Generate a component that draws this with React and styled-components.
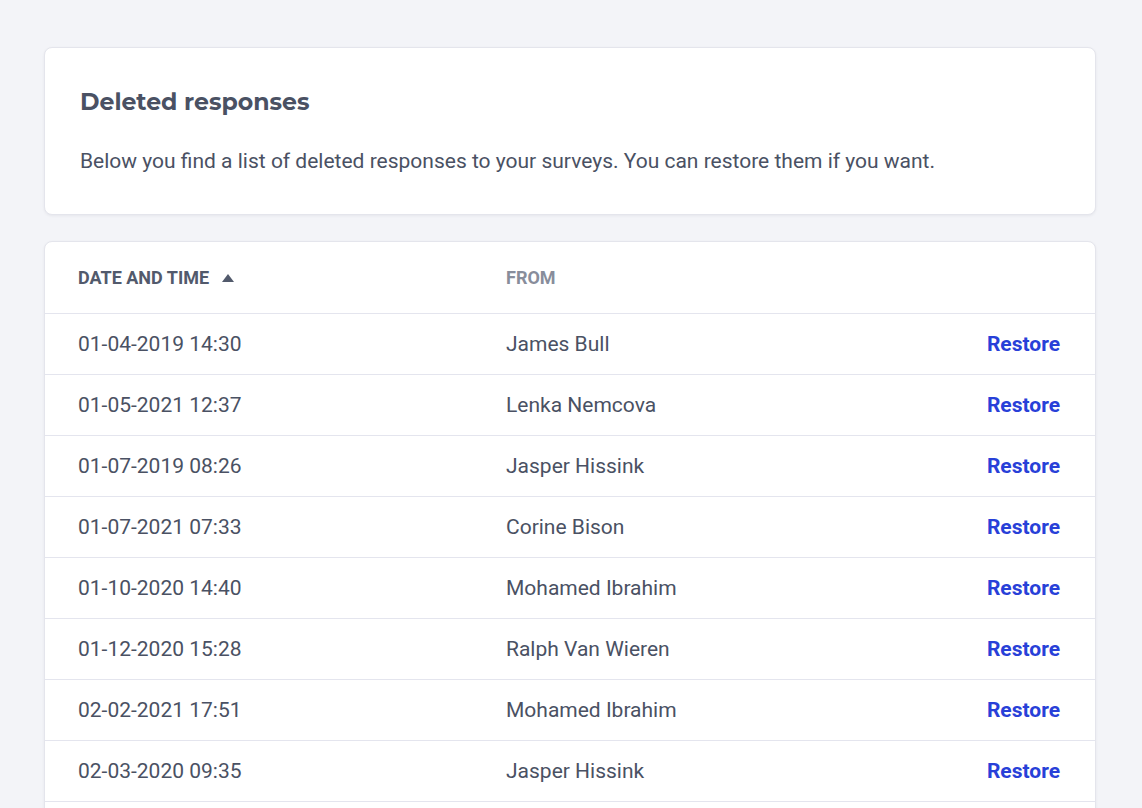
import React from "react";
import styled, { createGlobalStyle } from "styled-components";

const GlobalStyle = createGlobalStyle`
  html, body {
    margin: 0;
    padding: 0;
    background-color: #f3f4f8;
    font-family: Roboto, "Liberation Sans", sans-serif;
  }
`;

const Page = styled.div`
  padding: 47px 46px 0 44px;
  display: flex;
  flex-direction: column;
  gap: 26px;
  height: 808px;
  box-sizing: border-box;
  overflow: hidden;
`;

const Card = styled.div`
  background-color: #fff;
  border: 1px solid #e4e5ec;
  border-radius: 8px;
  box-shadow: 0 1px 3px rgba(20, 25, 50, 0.06);
`;

const Intro = styled(Card)`
  padding: 40px 36px 39px 35px;
`;

const TableCard = styled(Card)`
  flex: 1 0 auto;
  margin-bottom: -24px;
`;

const Title = styled.h1`
  margin: 0;
  font-family: Montserrat, Lato, "Open Sans", sans-serif;
  font-weight: 700;
  font-size: 23.6px;
  line-height: 28px;
  color: #4a5163;
`;

const Description = styled.p`
  margin: 31px 0 0;
  font-size: 21px;
  line-height: 28px;
  color: #4a5163;
`;

const Row = styled.div`
  display: grid;
  grid-template-columns: 428px 1fr auto;
  align-items: center;
  padding: 0 35px 0 33px;
  height: ${(p) => (p.$header ? "71px" : "60px")};
  border-bottom: 1px solid #e4e5ee;
`;

const HeaderCell = styled.div`
  display: flex;
  align-items: center;
  gap: 13px;
  font-size: 18px;
  font-weight: 700;
  text-transform: uppercase;
  color: ${(p) => (p.$active ? "#525a6c" : "#888d9b")};
`;

const Cell = styled.div`
  font-size: 21px;
  color: #4a5163;
`;

const RestoreButton = styled.button`
  background: none;
  border: none;
  padding: 0;
  font-family: Roboto, "Liberation Sans", sans-serif;
  font-size: 21px;
  font-weight: 700;
  color: #2840d8;
  cursor: pointer;
`;

const SortArrow = () => (
  <svg width="12" height="8" viewBox="0 0 12 8">
    <path d="M6 0 L12 8 L0 8 Z" fill="#525a6c" />
  </svg>
);

const responses = [
  ["01-04-2019 14:30", "James Bull"],
  ["01-05-2021 12:37", "Lenka Nemcova"],
  ["01-07-2019 08:26", "Jasper Hissink"],
  ["01-07-2021 07:33", "Corine Bison"],
  ["01-10-2020 14:40", "Mohamed Ibrahim"],
  ["01-12-2020 15:28", "Ralph Van Wieren"],
  ["02-02-2021 17:51", "Mohamed Ibrahim"],
  ["02-03-2020 09:35", "Jasper Hissink"],
];

const App = () => {
  return (
    <>
      <GlobalStyle />
      <Page>
        <Intro>
          <Title>Deleted responses</Title>
          <Description>
            Below you find a list of deleted responses to your surveys. You can
            restore them if you want.
          </Description>
        </Intro>
        <TableCard>
          <Row $header>
            <HeaderCell $active>
              Date and time <SortArrow />
            </HeaderCell>
            <HeaderCell>From</HeaderCell>
            <div />
          </Row>
          {responses.map(([date, name], i) => (
            <Row key={i}>
              <Cell>{date}</Cell>
              <Cell>{name}</Cell>
              <RestoreButton>Restore</RestoreButton>
            </Row>
          ))}
        </TableCard>
      </Page>
    </>
  );
};

export default App;
